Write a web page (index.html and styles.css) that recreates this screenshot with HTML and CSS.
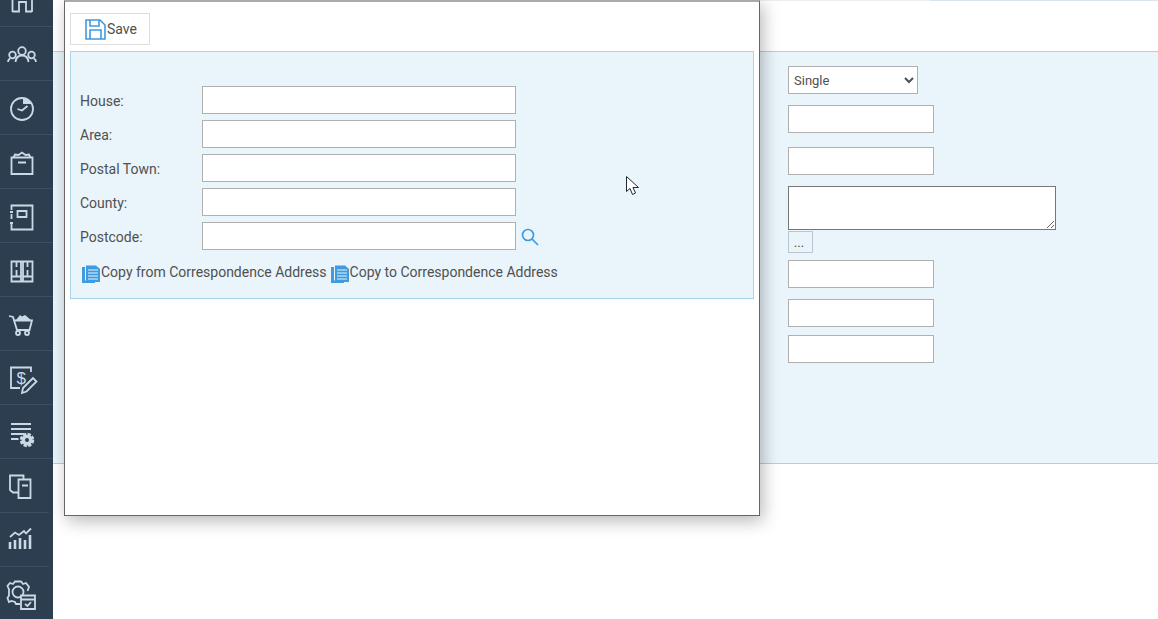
FILE: index.html
```html
<!DOCTYPE html>
<html lang="en">
<head>
<meta charset="utf-8">
<title>Address</title>
<link rel="stylesheet" href="styles.css">
</head>
<body>
<div class="app">
  <nav class="sidebar">
    <div class="nav-row"><svg class="nav-icon" viewBox="0 0 53 53"><path d="M12.500 39V24M32 39V24M12.500 38.500H19V29H26V38.500H32M11 24L22 17L34 24"/></svg></div>
    <div class="nav-row"><svg class="nav-icon" viewBox="0 0 53 53"><circle cx="22" cy="24" r="3.800"/><circle cx="12.500" cy="28" r="3.300"/><circle cx="31.500" cy="28" r="3.300"/><path d="M15.500 35C16 30 18 28.500 22 28.500S28 30 28.500 35M8 35C8 33.500 8.500 32.500 10 31.500M36 35C36 33.500 35.500 32.500 34 31.500"/></svg></div>
    <div class="nav-row"><svg class="nav-icon" viewBox="0 0 53 53"><circle cx="22" cy="28" r="11"/><path d="M17.500 28L22 29.500L27.500 25"/><path class="solid" d="M23 17.500A10.500 10.500 0 0 1 31.500 23L23 23Z"/></svg></div>
    <div class="nav-row"><svg class="nav-icon" viewBox="0 0 53 53"><path d="M11.500 22.500H32.500V39H11.500ZM18 27.500H26M13.500 22.500L15 19.500L18.500 20L22 17.500L25.500 20L29 19.500L30.500 22.500"/></svg></div>
    <div class="nav-row"><svg class="nav-icon" viewBox="0 0 53 53"><path d="M11.500 21V16.500H32.500V40.500H11.500V34M11.500 25V30M17.500 22H26.500V28H17.500Z"/><path d="M10 23H13M10 34H13"/></svg></div>
    <div class="nav-row"><svg class="nav-icon" viewBox="0 0 53 53"><path d="M11.500 18.500H32.500V38.500H11.500ZM21 18.500V38.500M23 18.500V38.500M16.500 19V24M16.500 27V33M27.500 19V24M27.500 27V33M11.500 33.500H21M23 33.500H32.500"/></svg></div>
    <div class="nav-row"><svg class="nav-icon" viewBox="0 0 53 53"><path d="M9 19L13 20L17 33H29.500L32 23.500H14"/><circle cx="18" cy="36" r="2"/><circle cx="27" cy="36" r="2"/><path class="solid" d="M16 23L20 18L22 19.500L25 18L31 23Z"/></svg></div>
    <div class="nav-row"><svg class="nav-icon" viewBox="0 0 53 53"><path d="M31 21V16.500H11V37H20"/><text class="dollar" x="16.500" y="33">$</text><path class="pencil" d="M22 42L23 37L33 27L36.500 30.500L26.500 40.500Z"/></svg></div>
    <div class="nav-row"><svg class="nav-icon" viewBox="0 0 53 53"><path d="M11 19H31M11 24H31M11 29H24M11 34H18.500"/><circle class="gear" cx="27" cy="35" r="5.500"/><circle cx="27" cy="35" r="2" class="hole"/></svg></div>
    <div class="nav-row nav-row-short"><svg class="nav-icon" viewBox="0 0 53 53"><path d="M18 33.500H13L10 31V16.500H23.500V20.500"/><path d="M18.500 20.500H30.500V39H18.500ZM22 26.500H28M18.500 20.500V33"/></svg></div>
    <div class="nav-row nav-row-short"><svg class="nav-icon nav-icon-bold" viewBox="0 0 53 53"><path d="M10 36V29M15 36V27M20 36V25M25 36V27M30 36V22"/><path class="thin" d="M10 24L15 19.500L19 22L24 18L26 20.500L31 15.500"/></svg></div>
    <div class="nav-row"><svg class="nav-icon" viewBox="0 0 53 53"><circle cx="18" cy="25" r="5.500"/><path d="M20 37H16L15 35L11.500 34L9 35L7.500 31L9 28.500V22.500L7.500 19L10 16L13 17L15 14.500H21L23 17L26 16L29 20L27.500 24"/><path class="filled-dark" d="M21 28.500H35V42H21Z"/><path d="M21 32.500H35M25 37L27.500 39L31 35"/></svg></div>
  </nav>

  <main class="page">
    <div class="tabs-line">
      <span class="tab-rule-grey"></span>
      <span class="tab-rule-blue"></span>
    </div>
    <section class="page-panel">
      <select class="select-field"><option>Single</option></select>
      <input class="bg-input gap-11" type="text">
      <input class="bg-input gap-14" type="text">
      <textarea class="bg-textarea"></textarea>
      <button class="dots-btn" type="button">...</button>
      <input class="bg-input gap-7" type="text">
      <input class="bg-input gap-11" type="text">
      <input class="bg-input gap-8" type="text">
    </section>
  </main>

  <div class="modal">
    <div class="toolbar">
      <button class="save-btn" type="button">
        <svg class="save-icon" viewBox="0 0 21 21"><path d="M1 1H15L20 6V20H1ZM5 1V7H14V1M5 20V11H16V20"/></svg>
        <span>Save</span>
      </button>
    </div>
    <section class="address-panel">
      <div class="field-row"><label class="field-label">House:</label><input class="field-input" type="text"></div>
      <div class="field-row"><label class="field-label">Area:</label><input class="field-input" type="text"></div>
      <div class="field-row"><label class="field-label">Postal Town:</label><input class="field-input" type="text"></div>
      <div class="field-row"><label class="field-label">County:</label><input class="field-input" type="text"></div>
      <div class="field-row">
        <label class="field-label">Postcode:</label><input class="field-input" type="text">
        <svg class="search-icon" viewBox="0 0 18 18"><circle cx="7" cy="7" r="5.500"/><path d="M11 11L17 17"/></svg>
      </div>
      <div class="copy-row">
        <a class="copy-link"><svg class="copy-icon" viewBox="0 0 18 18"><path class="copy-back" d="M0 2H3V15.500H13V18H0Z"/><path class="copy-front" d="M4 0.500H14L18 4V17H4Z"/><path class="copy-lines" d="M6 5H16M6 8H16M6 11H16M6 14H16"/></svg>Copy from Correspondence Address</a>
        <a class="copy-link"><svg class="copy-icon" viewBox="0 0 18 18"><path class="copy-back" d="M0 2H3V15.500H13V18H0Z"/><path class="copy-front" d="M4 0.500H14L18 4V17H4Z"/><path class="copy-lines" d="M6 5H16M6 8H16M6 11H16M6 14H16"/></svg>Copy to Correspondence Address</a>
      </div>
    </section>
  </div>

  <svg class="cursor" viewBox="0 0 14 20"><path d="M0.500 0.500V15.500L4 12.500L6.500 18.500L9.500 17L7 11.500H12.500Z"/></svg>
</div>
</body>
</html>
```
FILE: styles.css
```css
* { box-sizing: border-box; }
html, body { margin: 0; height: 100%; background: #fff; overflow: hidden; }
body { font-family: Roboto, "Liberation Sans", sans-serif; font-size: 14px; color: #505050; }

.app { position: relative; display: flex; width: 1158px; height: 619px; overflow: hidden; }

.sidebar { flex: 0 0 53px; height: 646px; margin-top: -27px; background: #2c3e50; }
.nav-row { height: 54px; border-bottom: 1px solid #3d4f60; }
.nav-row-short { border-bottom: 0; background: linear-gradient(#3d4f60, #3d4f60) left bottom / 49px 1px no-repeat; }
.nav-icon { display: block; width: 53px; height: 53px; fill: none; stroke: #cbd9e6; stroke-width: 1.800; }
.nav-icon .solid { fill: #cbd9e6; stroke: none; }
.nav-icon .dollar { fill: #cbd9e6; stroke: none; font-family: "Liberation Sans", sans-serif; font-size: 17px; }
.nav-icon .pencil { fill: #2c3e50; }
.nav-icon .gear { stroke-width: 3.500; stroke-dasharray: 3 1.300; fill: #cbd9e6; }
.nav-icon .hole { fill: #2c3e50; stroke: none; }
.nav-icon .filled-dark { fill: #2c3e50; }
.nav-icon-bold { stroke-width: 2.600; }
.nav-icon-bold .thin { stroke-width: 1.800; }

.page { flex: 1; display: flex; flex-direction: column; min-width: 0; }
.tabs-line { display: flex; height: 51px; padding-left: 707px; align-items: flex-start; }
.tab-rule-grey { width: 170px; height: 1px; background: #eee; }
.tab-rule-blue { flex: 1; height: 1px; background: #d8e4ee; }

.page-panel { display: flex; flex-direction: column; align-items: flex-start; height: 413px; padding: 14px 0 0 735px; background: #e9f4fb; border-top: 1px solid #a9d2ec; border-bottom: 1px solid #a9d2ec; }
.select-field { width: 130px; height: 28px; padding-left: 1px; font: 13px Roboto, sans-serif; color: #505050; background: #fff; border: 1px solid #b0b0b0; border-radius: 0; }
.bg-input { display: block; width: 146px; height: 28px; background: #fff; border: 1px solid #b0b0b0; }
.gap-7 { margin-top: 7px; }
.gap-8 { margin-top: 8px; }
.gap-11 { margin-top: 11px; }
.gap-14 { margin-top: 14px; }
.bg-textarea { display: block; width: 268px; height: 44px; margin-top: 11px; background: #fff; border: 1px solid #767676; }
.dots-btn { width: 25px; height: 22px; margin-top: 1px; padding: 0 3px 0 0; font: 13px Roboto, sans-serif; color: #505050; background: #e9f4fb; border: 1px solid #bcc6cc; }

.modal { position: absolute; left: 64px; top: 0; width: 696px; height: 516px; padding: 11px 5px 0; background: #fff; border: 1px solid #666; border-top: 2px solid #aaa; box-shadow: 3px 5px 16px rgba(0, 0, 0, .28); }
.toolbar { height: 38px; }
.save-btn { display: flex; align-items: center; width: 80px; height: 32px; padding: 0 0 0 14px; font: 14px Roboto, sans-serif; color: #505050; background: #fff; border: 1px solid #ddd; }
.save-icon { width: 21px; height: 21px; margin-right: 1px; fill: none; stroke: #3f9be0; stroke-width: 1.600; }

.address-panel { height: 248px; padding: 34px 0 0 9px; background: #e9f4fb; border: 1px solid #a8d4ee; }
.field-row { display: flex; align-items: center; height: 28px; margin-bottom: 6px; }
.field-label { flex: 0 0 122px; padding-top: 2px; }
.field-input { width: 314px; height: 28px; background: #fff; border: 1px solid #b0b0b0; }
.search-icon { width: 18px; height: 18px; margin: 2px 0 0 5px; fill: none; stroke: #3f9be0; stroke-width: 1.700; }
.copy-row { display: flex; gap: 4px; margin: 12px 0 0 2px; }
.copy-link { display: flex; align-items: center; height: 20px; }
.copy-icon { width: 18px; height: 18px; margin: 4px 1px 0 0; }
.copy-back, .copy-front { fill: #3f9be0; }
.copy-lines { fill: none; stroke: #e9f4fb; stroke-width: 1; }

.cursor { position: absolute; left: 626px; top: 176px; width: 14px; height: 20px; fill: #fff; stroke: #1e2a38; stroke-width: 1; }
```
